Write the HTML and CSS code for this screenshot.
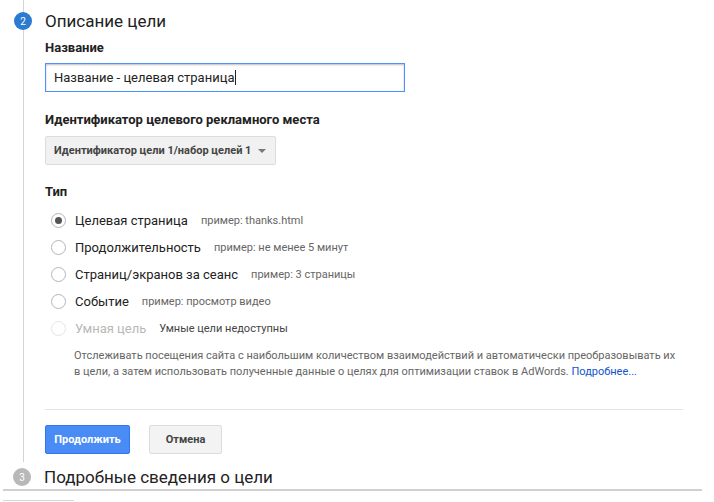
FILE: index.html
```html
<!DOCTYPE html>
<html lang="ru">
<head>
<meta charset="utf-8">
<link rel="stylesheet" href="styles.css">
</head>
<body>
<div class="page">
  <div class="step active">
    <div class="step-head">
      <span class="num num-blue">2</span>
      <h2 class="step-title">Описание цели</h2>
    </div>
    <div class="step-body">
      <div class="label">Название</div>
      <div class="input"><span>Название - целевая страница</span><span class="caret"></span></div>

      <div class="label label-id">Идентификатор целевого рекламного места</div>
      <div class="dropdown">Идентификатор цели 1/набор целей 1 <span class="arrow"></span></div>

      <div class="label label-type">Тип</div>
      <ul class="radios">
        <li class="radio-row"><span class="radio checked"></span><span class="rlabel">Целевая страница</span><span class="hint">пример: thanks.html</span></li>
        <li class="radio-row"><span class="radio"></span><span class="rlabel">Продолжительность</span><span class="hint">пример: не менее 5 минут</span></li>
        <li class="radio-row"><span class="radio"></span><span class="rlabel">Страниц/экранов за сеанс</span><span class="hint">пример: 3 страницы</span></li>
        <li class="radio-row"><span class="radio"></span><span class="rlabel">Событие</span><span class="hint">пример: просмотр видео</span></li>
        <li class="radio-row disabled"><span class="radio"></span><span class="rlabel">Умная цель</span><span class="hint dark">Умные цели недоступны</span></li>
      </ul>
      <p class="desc">Отслеживать посещения сайта с наибольшим количеством взаимодействий и автоматически преобразовывать их в цели, а затем использовать полученные данные о целях для оптимизации ставок в AdWords. <a class="more">Подробнее...</a></p>
      <div class="divider"></div>
      <div class="buttons">
        <button class="btn btn-primary">Продолжить</button>
        <button class="btn btn-default">Отмена</button>
      </div>
    </div>
  </div>
  <div class="step next">
    <div class="step-head">
      <span class="num num-gray">3</span>
      <h2 class="step-title">Подробные сведения о цели</h2>
    </div>
  </div>
  <div class="footer-line"></div>
  <div class="footer-box"></div>
</div>
</body>
</html>
```
FILE: styles.css
```css
* { box-sizing: border-box; }
html, body { margin: 0; padding: 0; background: #fff; }
body { font-family: Roboto, "Noto Sans", Arial, sans-serif; color: #222; width: 714px; height: 502px; overflow: hidden; }
.page { padding-left: 14px; }
.step.active { border-left: 1px solid #d4d4d4; margin-left: 9px; padding-bottom: 8px; }
.step-head { display: flex; align-items: center; margin-left: -10px; }
.step.active .step-head { height: 42px; }
.num { width: 18px; height: 18px; border-radius: 50%; color: #fff; font-size: 10px; display: flex; align-items: center; justify-content: center; flex: none; }
.num-blue { background: #2b7bd0; }
.num-gray { background: #b8b8b8; }
.step-title { margin: 0 0 0 13px; font-size: 17px; font-weight: 400; color: #222; line-height: 22px; }
.step-body { padding-left: 21px; }
.label { font-size: 13px; font-weight: 700; color: #222; line-height: 16px; margin-top: -2px; }
.input { margin-top: 7px; width: 360px; height: 29px; border: 1px solid #4d90fe; box-shadow: inset 0 1px 2px rgba(0,0,0,0.25); font-size: 13px; padding: 0 0 0 8px; display: flex; align-items: center; color: #222; }
.caret { display: inline-block; width: 1px; height: 15px; background: #222; margin-left: 1px; }
.label-id { margin-top: 20px; }
.dropdown { margin-top: 8px; display: flex; width: max-content; align-items: center; height: 29px; padding: 0 9px 0 8px; background: #f1f1f1; border: 1px solid #dcdcdc; border-radius: 2px; font-size: 11px; font-weight: 700; color: #444; white-space: nowrap; }
.arrow { display: inline-block; width: 0; height: 0; border-left: 4px solid transparent; border-right: 4px solid transparent; border-top: 4px solid #777; margin-left: 7px; }
.label-type { margin-top: 19px; }
.radios { list-style: none; margin: 7px 0 0; padding: 0; }
.radio-row { display: flex; align-items: center; height: 27px; padding-left: 6px; }
.radio { width: 15px; height: 15px; border-radius: 50%; border: 1px solid #b5b5b5; background: #fff; flex: none; display: flex; align-items: center; justify-content: center; }
.radio.checked::after { content: ""; width: 7px; height: 7px; border-radius: 50%; background: #555; }
.rlabel { font-size: 13px; color: #222; margin-left: 9px; }
.hint { font-size: 11px; color: #666; margin-left: 13px; }
.hint.dark { color: #444; }
.disabled .radio { border-color: #e5e5e5; }
.disabled .rlabel { color: #b8b8b8; }
.desc { margin: 6px 0 0 29px; font-size: 11px; line-height: 16px; color: #666; width: 610px; }
.more { color: #15c; }
.divider { margin-top: 29px; height: 1px; background: #e3e3e3; width: 638px; }
.buttons { display: flex; gap: 19px; margin-top: 15px; }
.btn { height: 29px; font-family: inherit; font-size: 11px; font-weight: 700; border-radius: 2px; padding: 0; cursor: pointer; }
.btn-primary { background: #4a8cf6; border: 1px solid #3079ed; color: #fff; width: 85px; }
.btn-default { background: #f3f3f3; border: 1px solid #dcdcdc; color: #444; width: 73px; }
.step.next .step-head { margin-left: -1px; height: 24px; padding-top: 6px; }
.footer-line { margin-left: -11px; width: 699px; height: 2px; background: #d0d0d0; margin-top: 3px; }
.footer-box { margin-left: -11px; margin-top: 9px; width: 71px; height: 10px; border-top: 1px solid #d6d6d6; }
```
